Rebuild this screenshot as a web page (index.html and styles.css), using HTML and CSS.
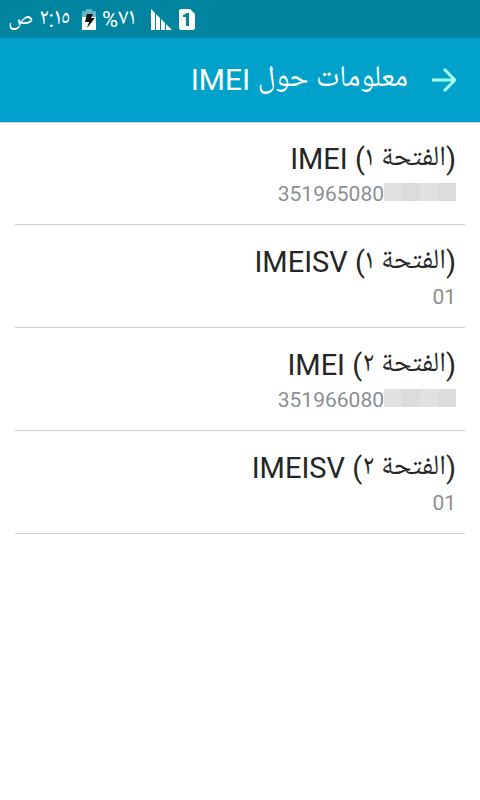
FILE: index.html
```html
<!DOCTYPE html>
<html lang="ar" dir="rtl">
<head>
  <meta charset="UTF-8">
  <meta name="viewport" content="width=device-width, initial-scale=1">
  <title>معلومات حول IMEI</title>
  <link rel="stylesheet" href="styles.css">
</head>
<body>
  <div class="status">
    <svg class="sim" width="16" height="21" viewBox="0 0 16 21" aria-hidden="true">
      <path d="M2 0h9l5 5v14a2 2 0 0 1-2 2H2a2 2 0 0 1-2-2V2a2 2 0 0 1 2-2z" fill="#fff"/>
      <path d="M7 4h3v13H7V8H4V6q2 0 3-2z" fill="#00849f"/>
    </svg>
    <svg class="signal" width="21" height="21" viewBox="0 0 21 21" aria-hidden="true">
      <path d="M0 0l4 4v17H0zM5 5l4 4v12H5zM10 10l4 4v7h-4zM15 15l6 6h-6z" fill="#fff"/>
    </svg>
    <span class="percent"><span class="ar">٧١</span>%</span>
    <svg class="battery" width="14" height="21" viewBox="0 0 14 21" aria-hidden="true">
      <path d="M4 0h6v2h4v6H0V2h4z" fill="#66b5c5"/>
      <path d="M0 8h14v13H0z" fill="#fff"/>
      <path d="M5 5h6L9 9h4l-8 10 2-6H3z" fill="#111"/>
    </svg>
    <span class="time"><span class="ar">٢:١٥ ص</span></span>
  </div>

  <header class="header">
    <button class="back" type="button" aria-label="رجوع">
      <svg width="24" height="24" viewBox="0 0 24 24" aria-hidden="true">
        <path d="M0 12h22M12 1l11 11-11 11" fill="none" stroke="#a2fff2" stroke-width="3"/>
      </svg>
    </button>
    <h1><span class="ar">معلومات حول</span> IMEI</h1>
  </header>

  <main class="list">
    <section class="item">
      <h2>(<span class="ar">الفتحة ١</span>) IMEI</h2>
      <p class="value"><span class="mask"><i></i><i></i><i></i><i></i></span><span>351965080</span></p>
    </section>
    <section class="item">
      <h2>(<span class="ar">الفتحة ١</span>) IMEISV</h2>
      <p class="value"><span>01</span></p>
    </section>
    <section class="item">
      <h2>(<span class="ar">الفتحة ٢</span>) IMEI</h2>
      <p class="value"><span class="mask"><i></i><i></i><i></i><i></i></span><span>351966080</span></p>
    </section>
    <section class="item">
      <h2>(<span class="ar">الفتحة ٢</span>) IMEISV</h2>
      <p class="value"><span>01</span></p>
    </section>
  </main>
</body>
</html>
```
FILE: styles.css
```css
body {
  margin: 0;
  background: #fff;
  color: #252525;
  font-family: Roboto, "Noto Naskh Arabic UI", "Noto Naskh Arabic", sans-serif;
}
h1, h2, p {
  margin: 0;
  font-weight: 400;
}
.ar {
  line-height: 1;
}
.status {
  display: flex;
  align-items: center;
  justify-content: flex-end;
  height: 38px;
  padding: 0 8px;
  background: #00849f;
  color: #fff;
  font-size: 22px;
}
.status .ar {
  font-size: 23px;
}
.signal {
  margin-right: 7px;
}
.percent {
  margin-right: 16px;
}
.battery {
  margin-right: 6px;
}
.time {
  margin-right: 12px;
}
.header {
  display: flex;
  align-items: center;
  box-sizing: border-box;
  height: 85px;
  padding: 0 24px;
  background: #00a2cb;
  border-bottom: 1px solid #c4cfd2;
  color: #fff;
}
.back {
  display: flex;
  margin: 0 0 0 24px;
  padding: 0;
  border: 0;
  background: none;
}
.header h1 {
  font-size: 30px;
  line-height: 40px;
}
.list {
  padding: 0 15px;
}
.item {
  padding: 17px 9px 15px;
  border-bottom: 1px solid #ccc;
}
.item:first-child {
  padding-top: 16px;
}
.item h2 {
  font-size: 29px;
  line-height: 40px;
}
.item .ar {
  font-size: 28px;
}
.value {
  display: flex;
  align-items: flex-start;
  color: #8b8f92;
  font-size: 21px;
  line-height: 30px;
}
.mask {
  display: flex;
  margin-top: 4px;
}
.mask i {
  width: 18px;
  height: 18px;
  background: #dbdcde;
}
.mask i:nth-child(even) {
  background: #e0e1e3;
}
```
